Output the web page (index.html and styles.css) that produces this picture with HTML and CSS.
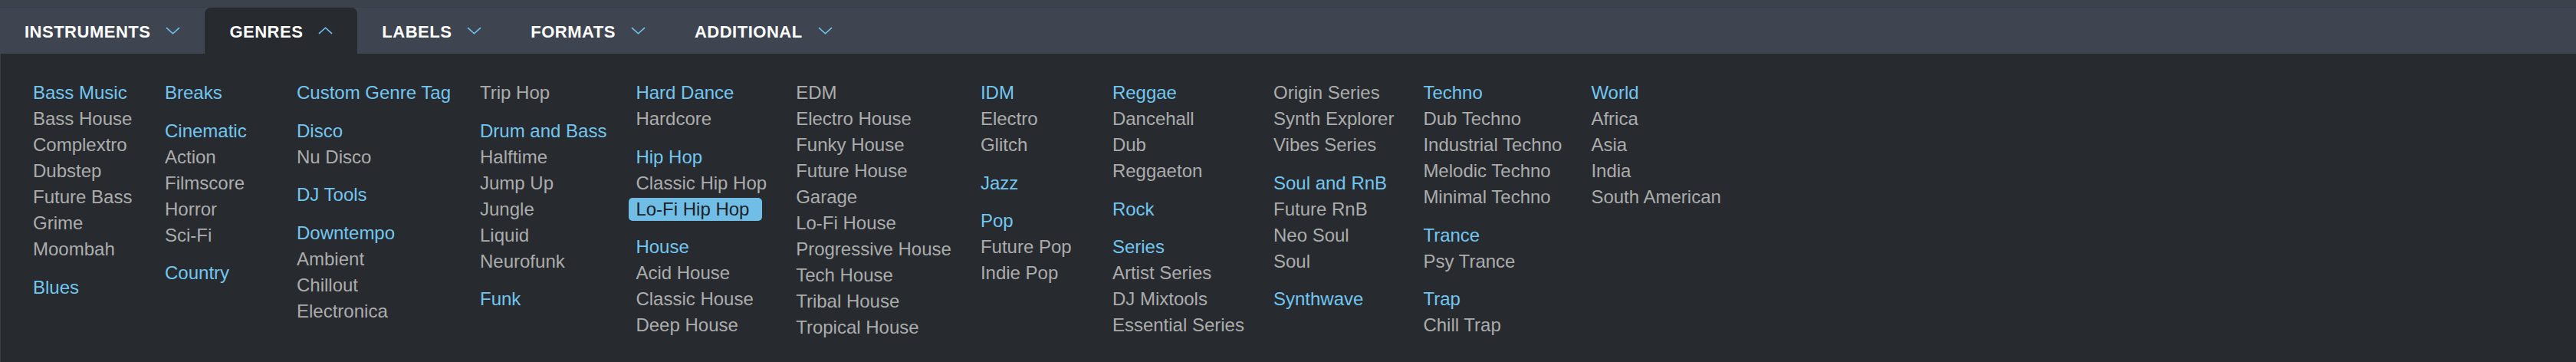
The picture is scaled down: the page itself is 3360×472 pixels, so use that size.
FILE: index.html
```html
<!DOCTYPE html>
<html lang="en">
<head>
<meta charset="utf-8">
<title>Genres</title>
<link rel="stylesheet" href="styles.css">
</head>
<body>
<nav class="tabs">
  <div class="tab"><span class="tab-label">INSTRUMENTS</span><svg class="chev" viewBox="0 0 19 10"><polyline points="1,1.2 9.5,8.8 18,1.2"/></svg></div>
  <div class="tab tab--active"><span class="tab-label">GENRES</span><svg class="chev" viewBox="0 0 19 10"><polyline points="1,8.8 9.5,1.2 18,8.8"/></svg></div>
  <div class="tab"><span class="tab-label">LABELS</span><svg class="chev" viewBox="0 0 19 10"><polyline points="1,1.2 9.5,8.8 18,1.2"/></svg></div>
  <div class="tab"><span class="tab-label">FORMATS</span><svg class="chev" viewBox="0 0 19 10"><polyline points="1,1.2 9.5,8.8 18,1.2"/></svg></div>
  <div class="tab"><span class="tab-label">ADDITIONAL</span><svg class="chev" viewBox="0 0 19 10"><polyline points="1,1.2 9.5,8.8 18,1.2"/></svg></div>
</nav>
<section class="genres">
  <div class="col">
    <div class="group"><div class="head">Bass Music</div><div class="item">Bass House</div><div class="item">Complextro</div><div class="item">Dubstep</div><div class="item">Future Bass</div><div class="item">Grime</div><div class="item">Moombah</div></div>
    <div class="group"><div class="head">Blues</div></div>
  </div>
  <div class="col">
    <div class="group"><div class="head">Breaks</div></div>
    <div class="group"><div class="head">Cinematic</div><div class="item">Action</div><div class="item">Filmscore</div><div class="item">Horror</div><div class="item">Sci-Fi</div></div>
    <div class="group"><div class="head">Country</div></div>
  </div>
  <div class="col">
    <div class="group"><div class="head">Custom Genre Tag</div></div>
    <div class="group"><div class="head">Disco</div><div class="item">Nu Disco</div></div>
    <div class="group"><div class="head">DJ Tools</div></div>
    <div class="group"><div class="head">Downtempo</div><div class="item">Ambient</div><div class="item">Chillout</div><div class="item">Electronica</div></div>
  </div>
  <div class="col">
    <div class="group"><div class="item">Trip Hop</div></div>
    <div class="group"><div class="head">Drum and Bass</div><div class="item">Halftime</div><div class="item">Jump Up</div><div class="item">Jungle</div><div class="item">Liquid</div><div class="item">Neurofunk</div></div>
    <div class="group"><div class="head">Funk</div></div>
  </div>
  <div class="col">
    <div class="group"><div class="head">Hard Dance</div><div class="item">Hardcore</div></div>
    <div class="group"><div class="head">Hip Hop</div><div class="item">Classic Hip Hop</div><div class="item"><span class="pill">Lo-Fi Hip Hop</span></div></div>
    <div class="group"><div class="head">House</div><div class="item">Acid House</div><div class="item">Classic House</div><div class="item">Deep House</div></div>
  </div>
  <div class="col">
    <div class="group"><div class="item">EDM</div><div class="item">Electro House</div><div class="item">Funky House</div><div class="item">Future House</div><div class="item">Garage</div><div class="item">Lo-Fi House</div><div class="item">Progressive House</div><div class="item">Tech House</div><div class="item">Tribal House</div><div class="item">Tropical House</div></div>
  </div>
  <div class="col">
    <div class="group"><div class="head">IDM</div><div class="item">Electro</div><div class="item">Glitch</div></div>
    <div class="group"><div class="head">Jazz</div></div>
    <div class="group"><div class="head">Pop</div><div class="item">Future Pop</div><div class="item">Indie Pop</div></div>
  </div>
  <div class="col">
    <div class="group"><div class="head">Reggae</div><div class="item">Dancehall</div><div class="item">Dub</div><div class="item">Reggaeton</div></div>
    <div class="group"><div class="head">Rock</div></div>
    <div class="group"><div class="head">Series</div><div class="item">Artist Series</div><div class="item">DJ Mixtools</div><div class="item">Essential Series</div></div>
  </div>
  <div class="col">
    <div class="group"><div class="item">Origin Series</div><div class="item">Synth Explorer</div><div class="item">Vibes Series</div></div>
    <div class="group"><div class="head">Soul and RnB</div><div class="item">Future RnB</div><div class="item">Neo Soul</div><div class="item">Soul</div></div>
    <div class="group"><div class="head">Synthwave</div></div>
  </div>
  <div class="col">
    <div class="group"><div class="head">Techno</div><div class="item">Dub Techno</div><div class="item">Industrial Techno</div><div class="item">Melodic Techno</div><div class="item">Minimal Techno</div></div>
    <div class="group"><div class="head">Trance</div><div class="item">Psy Trance</div></div>
    <div class="group"><div class="head">Trap</div><div class="item">Chill Trap</div></div>
  </div>
  <div class="col">
    <div class="group"><div class="head">World</div><div class="item">Africa</div><div class="item">Asia</div><div class="item">India</div><div class="item">South American</div></div>
  </div>
</section>
</body>
</html>
```
FILE: styles.css
```css
html, body {
  margin: 0;
  padding: 0;
  background: #272b2f;
}

body {
  font-family: "Liberation Sans", Arial, Helvetica, sans-serif;
  display: flex;
  flex-direction: column;
  height: 100vh;
  overflow: hidden;
}

.tabs {
  display: flex;
  flex: none;
  height: 70px;
  padding-top: 10px;
  box-sizing: border-box;
  background: linear-gradient(#3b424c 0 9px, #383f48 9px 10px, #3e4550 10px);
}

.tab {
  display: flex;
  align-items: center;
  gap: 20px;
  padding: 3px 32px 0 32px;
  color: #ffffff;
  font-weight: 700;
  font-size: 22px;
  letter-spacing: 0.5px;
  border-radius: 8px 8px 0 0;
}

.tab--active {
  background: #272b2f;
}

.chev {
  width: 19px;
  height: 10px;
  margin-bottom: 3px;
  fill: none;
  stroke: #6fc4ee;
  stroke-width: 1.6;
}

.genres {
  flex: 1;
  display: flex;
  gap: 38px;
  padding: 34px 0 0 42px;
  border-left: 1px solid #383d42;
  background: #272b2f;
}

.col {
  min-width: 134px;
}

.group + .group {
  margin-top: 15.5px;
}

.head,
.item {
  font-size: 24px;
  line-height: 34px;
  white-space: nowrap;
}

.head {
  color: #72c6f0;
}

.item {
  color: #acacac;
}

.pill {
  display: inline-block;
  line-height: 30px;
  margin-left: -9px;
  padding: 0 17px 0 9px;
  border-radius: 5px;
  background: #70bee6;
  color: #1e2226;
}
```
